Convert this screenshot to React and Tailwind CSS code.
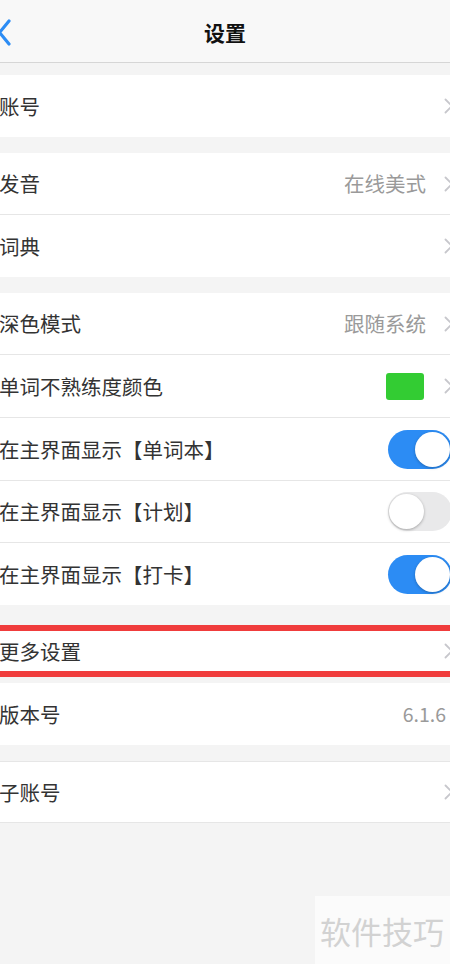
import React from "react";

const font = { fontFamily: '"Noto Sans CJK SC", "Noto Sans", sans-serif' };

function Chevron() {
  return (
    <svg width="10" height="18" viewBox="0 0 10 18" className="shrink-0 -mr-[4px]">
      <path d="M1.5 2.5 L8 9 L1.5 15.5" fill="none" stroke="#c7c7cc" strokeWidth="1.8" strokeLinecap="round" strokeLinejoin="round" />
    </svg>
  );
}

function Toggle({ on }) {
  return on ? (
    <div className="w-[64px] h-[39px] rounded-full bg-[#2c8cf4] relative -mr-[2px] shrink-0">
      <div className="absolute right-[2px] top-[2px] w-[35px] h-[35px] rounded-full bg-white shadow-[0_1px_3px_rgba(0,0,0,0.25)]" />
    </div>
  ) : (
    <div className="w-[64px] h-[39px] rounded-full bg-[#e9e9ea] relative -mr-[2px] shrink-0">
      <div className="absolute left-[1px] top-[2px] w-[35px] h-[35px] rounded-full bg-white shadow-[0_1px_3px_rgba(0,0,0,0.3)]" />
    </div>
  );
}

function Row({ label, value, chevron = true, toggle, swatch, h = "h-[62px]", border = true }) {
  return (
    <div className={`${h} flex items-center bg-white ${border ? "border-b border-[#e6e6e6]" : ""}`}>
      <span className="flex-1 text-[20.5px] text-[#333333] leading-none -ml-[1px]">{label}</span>
      {value && (
        <span className={`${chevron ? "text-[20.5px] mr-[18px]" : "text-[19.5px] mr-[4px]"} text-[#9a9a9a] leading-none`}>{value}</span>
      )}
      {swatch && <div className="w-[38px] h-[27px] rounded-[3px] bg-[#33cc33] mr-[20px]" />}
      {toggle !== undefined && <Toggle on={toggle} />}
      {chevron && toggle === undefined && <Chevron />}
    </div>
  );
}

export default function App() {
  return (
    <div className="w-[450px] h-[964px] bg-[#f4f4f4] overflow-hidden relative" style={font}>
      {/* header */}
      <div className="h-[63px] bg-[#f8f8f8] border-b border-[#d6d6d6] flex items-center justify-center relative">
        <svg width="14" height="28" viewBox="0 0 14 28" className="absolute left-[-3px] top-[19px]">
          <path d="M12 2 L2.5 13.5 L12 25" fill="none" stroke="#2c8cf4" strokeWidth="3.2" strokeLinecap="round" strokeLinejoin="round" />
        </svg>
        <span className="text-[21px] font-bold text-[#111111] leading-none mt-[2px]">设置</span>
      </div>

      <div className="h-[12px]" />
      <Row label="账号" border={false} />

      <div className="h-[16px]" />
      <Row label="发音" value="在线美式" />
      <Row label="词典" border={false} />

      <div className="h-[16px]" />
      <Row label="深色模式" value="跟随系统" />
      <Row label="单词不熟练度颜色" swatch h="h-[63px]" />
      <Row label="在主界面显示【单词本】" toggle={true} h="h-[63px]" />
      <Row label="在主界面显示【计划】" toggle={false} />
      <Row label="在主界面显示【打卡】" toggle={true} border={false} />

      <div className="h-[20px]" />
      <div className="h-[52px] bg-white border-y-[6px] border-[#f03c3c] flex items-center">
        <span className="flex-1 text-[20.5px] text-[#333333] leading-none -ml-[1px]">更多设置</span>
        <Chevron />
      </div>
      <div className="h-[6px]" />
      <Row label="版本号" value="6.1.6" chevron={false} border={false} />

      <div className="h-[16px]" />
      <div className="border-t border-[#e6e6e6]">
        <Row label="子账号" h="h-[61px]" />
      </div>

      {/* watermark */}
      <div className="absolute left-[315px] top-[896px] w-[135px] h-[68px] bg-[#fbfbfb] flex items-center pl-[5px]">
        <span className="text-[31px] text-[#d2d2d2] leading-none tracking-[0px]">软件技巧</span>
      </div>
    </div>
  );
}
